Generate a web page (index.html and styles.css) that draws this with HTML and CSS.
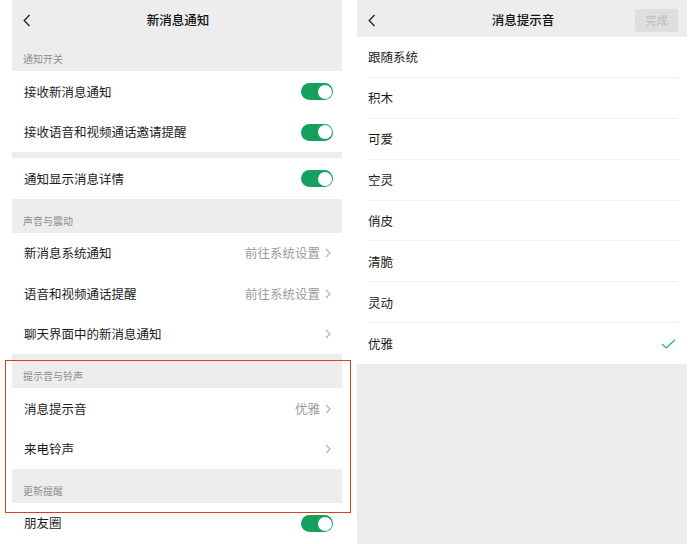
FILE: index.html
```html
<!DOCTYPE html>
<html lang="zh-CN">
<head>
<meta charset="utf-8">
<title>新消息通知</title>
<link rel="stylesheet" href="styles.css">
</head>
<body>
<div class="screen">
  <div class="phone">
    <div class="navbar">
      <span class="back"><svg width="8" height="13" viewBox="0 0 8 13"><path d="M6.5 1 L1.2 6.5 L6.5 12" fill="none" stroke="#222" stroke-width="1.3"/></svg></span>
      <span class="title">新消息通知</span>
      <span class="nav-side"></span>
    </div>
    <div class="sec sec-first"><span>通知开关</span></div>
    <div class="row"><span class="label">接收新消息通知</span><span class="switch"></span></div>
    <div class="row"><span class="label">接收语音和视频通话邀请提醒</span><span class="switch"></span></div>
    <div class="gap"></div>
    <div class="row"><span class="label">通知显示消息详情</span><span class="switch"></span></div>
    <div class="sec"><span>声音与震动</span></div>
    <div class="row"><span class="label">新消息系统通知</span><span class="value">前往系统设置</span><span class="chev"><svg width="6" height="10" viewBox="0 0 6 10"><path d="M1 1 L5 5 L1 9" fill="none" stroke="#b0b0b0" stroke-width="1.1"/></svg></span></div>
    <div class="row"><span class="label">语音和视频通话提醒</span><span class="value">前往系统设置</span><span class="chev"><svg width="6" height="10" viewBox="0 0 6 10"><path d="M1 1 L5 5 L1 9" fill="none" stroke="#b0b0b0" stroke-width="1.1"/></svg></span></div>
    <div class="row"><span class="label">聊天界面中的新消息通知</span><span class="chev"><svg width="6" height="10" viewBox="0 0 6 10"><path d="M1 1 L5 5 L1 9" fill="none" stroke="#b0b0b0" stroke-width="1.1"/></svg></span></div>
    <div class="sec"><span>提示音与铃声</span></div>
    <div class="row"><span class="label">消息提示音</span><span class="value">优雅</span><span class="chev"><svg width="6" height="10" viewBox="0 0 6 10"><path d="M1 1 L5 5 L1 9" fill="none" stroke="#b0b0b0" stroke-width="1.1"/></svg></span></div>
    <div class="row"><span class="label">来电铃声</span><span class="chev"><svg width="6" height="10" viewBox="0 0 6 10"><path d="M1 1 L5 5 L1 9" fill="none" stroke="#b0b0b0" stroke-width="1.1"/></svg></span></div>
    <div class="sec"><span>更新提醒</span></div>
    <div class="row row-last"><span class="label">朋友圈</span><span class="switch"></span></div>
  </div>

  <div class="phone phone-right">
    <div class="navbar navbar-short">
      <span class="back"><svg width="8" height="13" viewBox="0 0 8 13"><path d="M6.5 1 L1.2 6.5 L6.5 12" fill="none" stroke="#222" stroke-width="1.3"/></svg></span>
      <span class="title">消息提示音</span>
      <span class="nav-side nav-end"><span class="done">完成</span></span>
    </div>
    <div class="list">
      <div class="item"><span class="label">跟随系统</span></div>
      <div class="item"><span class="label">积木</span></div>
      <div class="item"><span class="label">可爱</span></div>
      <div class="item"><span class="label">空灵</span></div>
      <div class="item"><span class="label">俏皮</span></div>
      <div class="item"><span class="label">清脆</span></div>
      <div class="item"><span class="label">灵动</span></div>
      <div class="item"><span class="label">优雅</span><span class="check"><svg width="15" height="10" viewBox="0 0 15 10"><path d="M1 4.8 L5.2 9 L14 0.8" fill="none" stroke="#2aaa78" stroke-width="1.2"/></svg></span></div>
    </div>
  </div>

  <div class="annot"></div>
</div>
</body>
</html>
```
FILE: styles.css
```css
* { box-sizing: border-box; }
html, body {
  margin: 0;
  padding: 0;
  background: #ffffff;
}
body {
  font-family: "Noto Sans CJK SC", "Noto Sans", "Liberation Sans", sans-serif;
  color: #1c1c1c;
  width: 699px;
  height: 544px;
  overflow: hidden;
}
.screen {
  position: relative;
  display: flex;
  gap: 15px;
  padding-left: 12px;
  height: 544px;
}
.phone {
  width: 330px;
  height: 544px;
  background: #ededed;
  overflow: hidden;
  display: flex;
  flex-direction: column;
}
.navbar {
  height: 40px;
  flex: none;
  display: grid;
  grid-template-columns: 1fr auto 1fr;
  align-items: center;
  padding: 0 9px 0 11px;
}
.navbar-short {
  height: 37px;
  padding-top: 3px;
}
.back {
  display: flex;
  align-items: center;
}
.title {
  font-size: 12.5px;
  font-weight: 500;
  line-height: 16px;
  color: #111;
}
.nav-end {
  display: flex;
  justify-content: flex-end;
}
.done {
  width: 43px;
  height: 23px;
  background: #dedede;
  color: #b9b9b9;
  font-size: 11px;
  line-height: 23px;
  text-align: center;
  border-radius: 2px;
}
.sec {
  height: 34px;
  flex: none;
  display: flex;
  align-items: flex-end;
  padding: 0 0 6px 11px;
  font-size: 10px;
  line-height: 13px;
  color: #8e8e8e;
}
.sec-first {
  height: 31px;
}
.gap {
  height: 6px;
  flex: none;
}
.row {
  height: 40.5px;
  flex: none;
  background: #ffffff;
  display: flex;
  align-items: center;
  padding: 1px 11px 0 12px;
}
.row-last {
  flex: 1 0 auto;
  align-items: flex-start;
  padding-top: 12px;
}
.label {
  flex: 1;
  font-size: 12.5px;
  line-height: 16px;
  color: #1c1c1c;
}
.value {
  font-size: 12.5px;
  line-height: 16px;
  color: #9a9a9a;
  margin-right: 5px;
}
.chev {
  display: flex;
  align-items: center;
}
.switch {
  position: relative;
  width: 32px;
  height: 17px;
  border-radius: 9px;
  background: #17a05d;
  margin-right: -2px;
}
.switch::after {
  content: "";
  position: absolute;
  right: 1.5px;
  top: 1.5px;
  width: 14px;
  height: 14px;
  border-radius: 50%;
  background: #ffffff;
}
.list {
  background: #ffffff;
  padding: 0 9px 0 11px;
}
.item {
  height: 40.9px;
  display: flex;
  align-items: center;
  padding-top: 1px;
  border-bottom: 1px solid #efefef;
}
.item:last-child {
  border-bottom: none;
}
.check {
  display: flex;
  align-items: center;
  margin-right: 2px;
}
.annot {
  position: absolute;
  left: 5px;
  top: 360px;
  width: 346px;
  height: 153px;
  border: 1.5px solid #d4441c;
  pointer-events: none;
}
```
